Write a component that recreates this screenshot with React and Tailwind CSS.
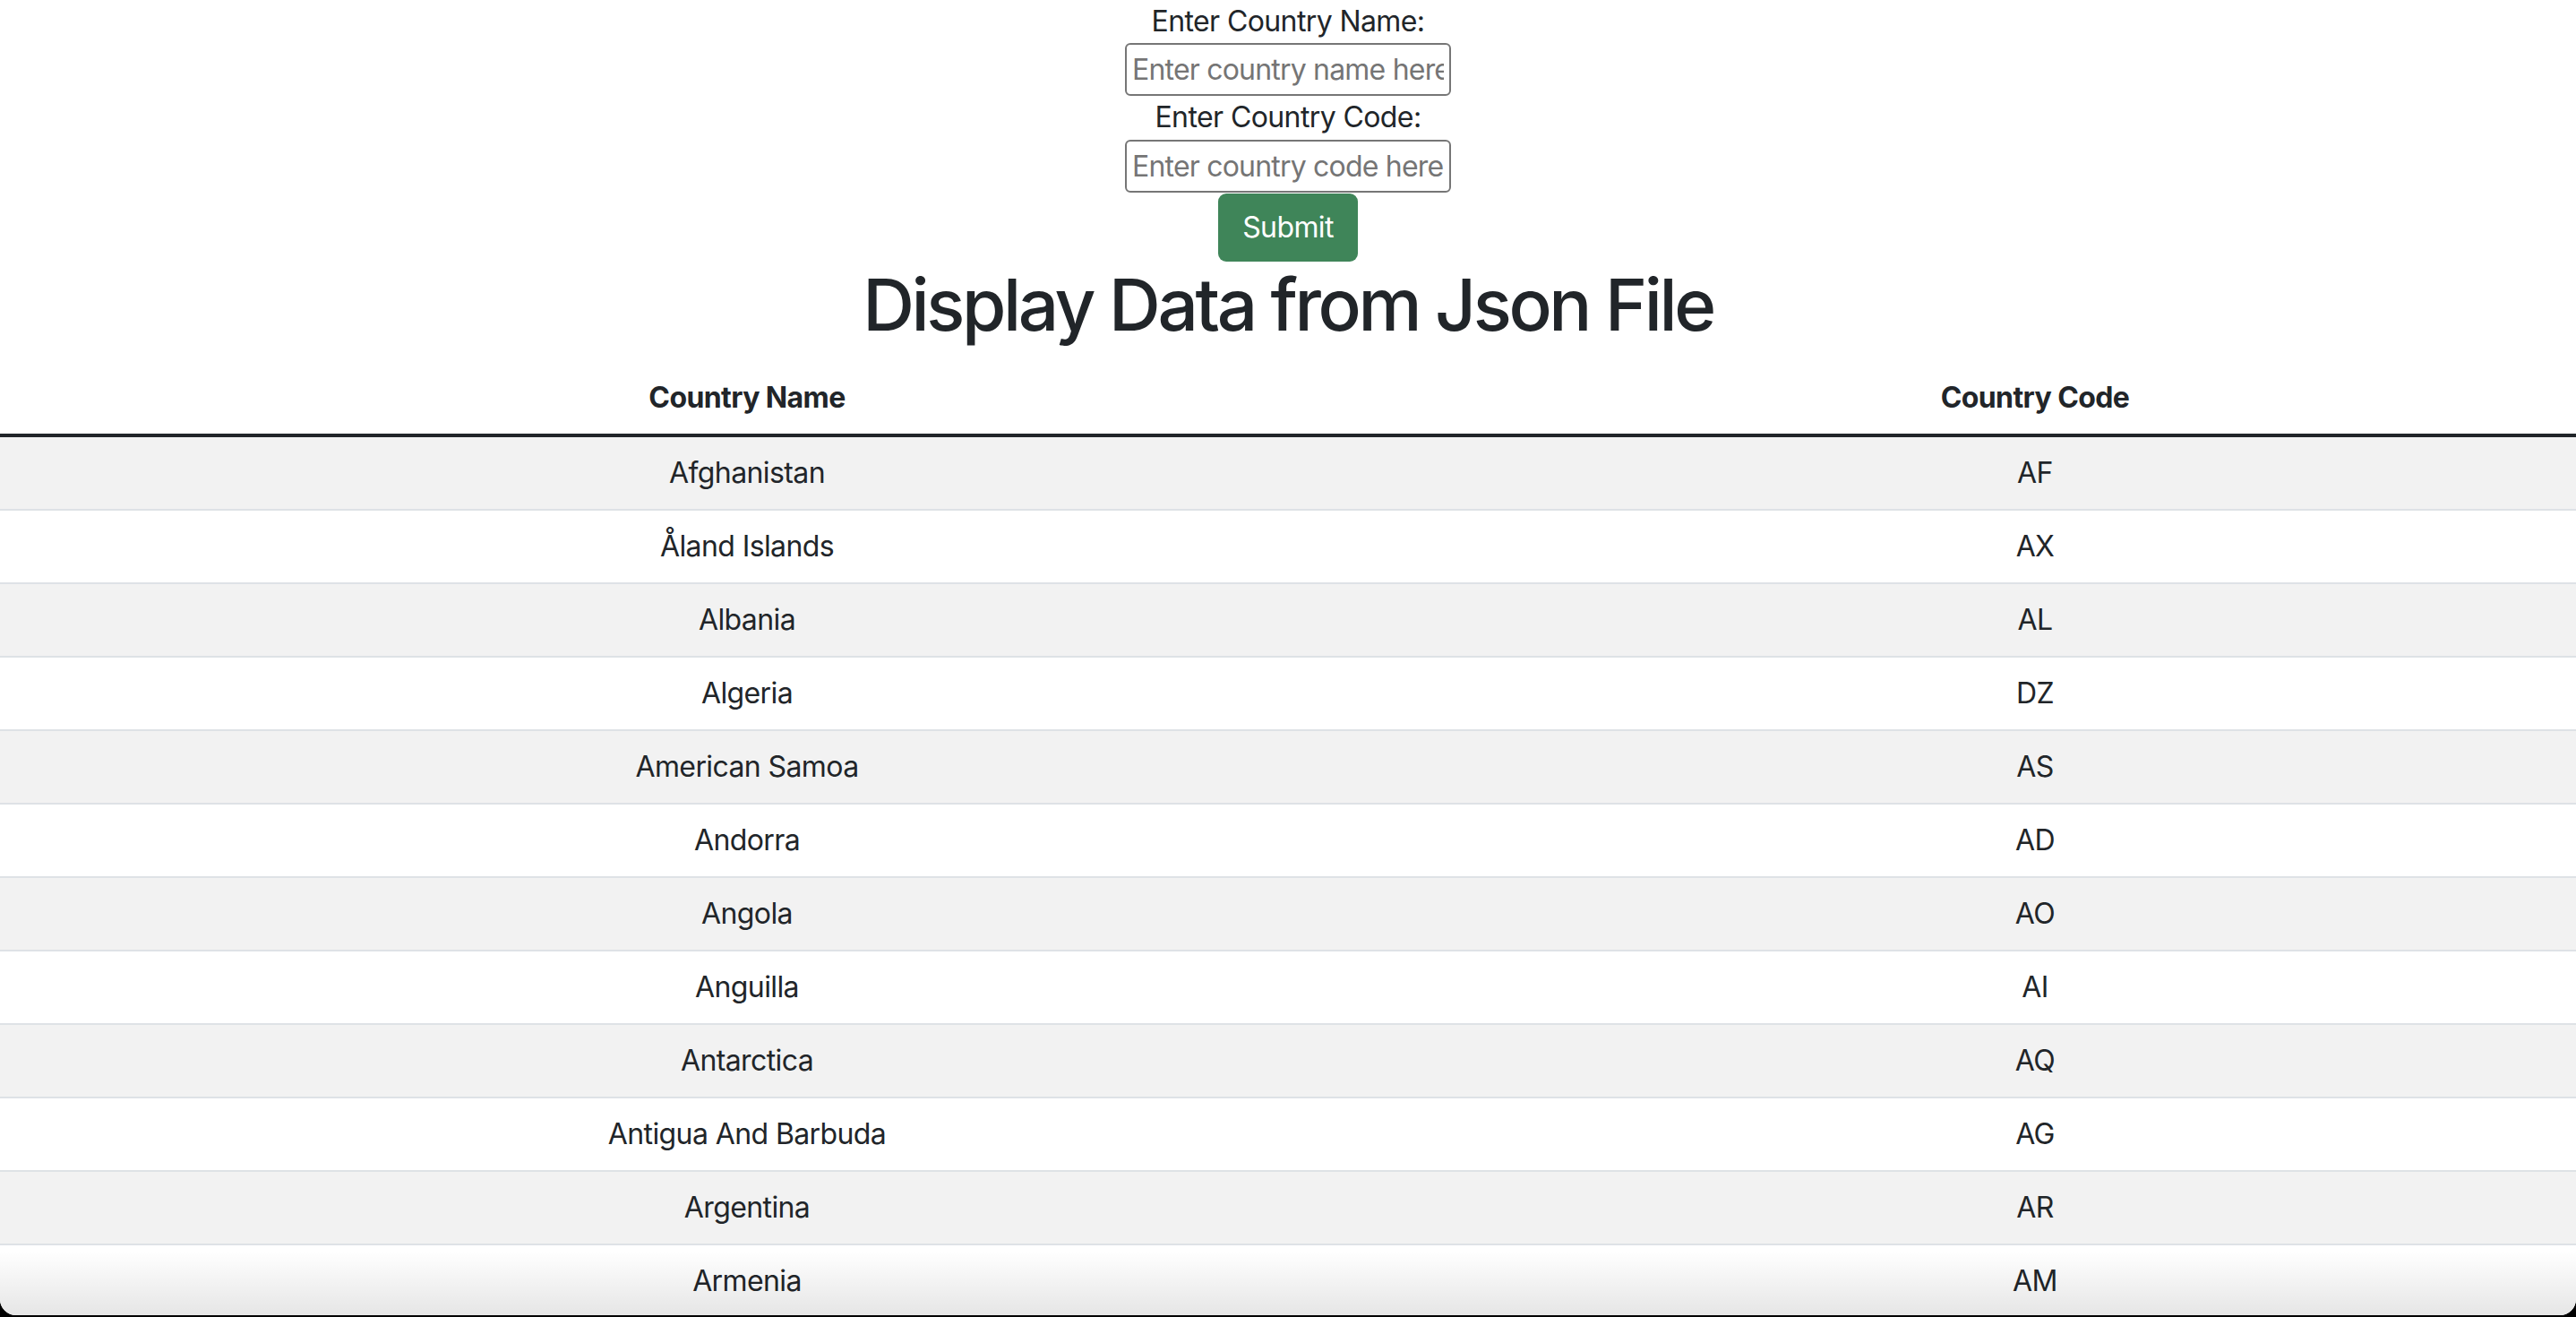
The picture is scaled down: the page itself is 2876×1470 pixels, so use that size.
import React from "react";

const countries = [
  ["Afghanistan", "AF"],
  ["Åland Islands", "AX"],
  ["Albania", "AL"],
  ["Algeria", "DZ"],
  ["American Samoa", "AS"],
  ["Andorra", "AD"],
  ["Angola", "AO"],
  ["Anguilla", "AI"],
  ["Antarctica", "AQ"],
  ["Antigua And Barbuda", "AG"],
  ["Argentina", "AR"],
  ["Armenia", "AM"],
];

export default function App() {
  return (
    <div className="relative h-[1470px] w-full overflow-hidden bg-black">
      <div
        className="relative h-[1468px] w-full overflow-hidden rounded-b-[18px] bg-white text-[#212529] tracking-[-0.6px]"
        style={{ fontFamily: "Inter, 'Noto Sans', sans-serif" }}
      >
        <div className="flex flex-col items-center">
          <label className="h-[48px] text-[32px] leading-[48px]">Enter Country Name:</label>
          <input
            type="text"
            placeholder="Enter country name here"
            className="h-[59px] w-[364px] rounded-[6px] border-2 border-[#767676] bg-white px-[6px] text-[32px] tracking-[-0.8px] placeholder:text-[#757575] outline-none"
          />
          <label className="h-[48px] text-[32px] leading-[48px]">Enter Country Code:</label>
          <input
            type="text"
            placeholder="Enter country code here"
            className="mt-[1px] h-[59px] w-[364px] rounded-[6px] border-2 border-[#767676] bg-white px-[6px] text-[32px] tracking-[-0.8px] placeholder:text-[#757575] outline-none"
          />
          <button className="mt-[1px] h-[76px] w-[156px] rounded-[9px] bg-[#3f8559] text-[32px] leading-[48px] text-white">
            Submit
          </button>
          <h1 className="mb-[16px] h-[96px] text-[80px] font-medium leading-[96px] tracking-[-3.4px]">
            Display Data from Json File
          </h1>
        </div>
        <table className="w-full border-collapse text-[32px]">
          <thead>
            <tr className="border-b-4 border-[#212529]">
              <th className="w-[1668px] py-[16px] text-center font-bold leading-[48px]">Country Name</th>
              <th className="py-[16px] text-center font-bold leading-[48px]">Country Code</th>
            </tr>
          </thead>
          <tbody>
            {countries.map(([name, code], i) => (
              <tr
                key={code}
                className={
                  i % 2 === 0
                    ? "border-b-2 border-[#dee2e6] bg-[#f2f2f2]"
                    : "border-b-2 border-[#dee2e6] bg-white"
                }
              >
                <td className="py-[16px] text-center leading-[48px]">{name}</td>
                <td className="py-[16px] text-center leading-[48px]">{code}</td>
              </tr>
            ))}
          </tbody>
        </table>
        <div className="pointer-events-none absolute inset-x-0 bottom-0 h-[72px] bg-gradient-to-b from-transparent to-black/[0.1]" />
      </div>
    </div>
  );
}
